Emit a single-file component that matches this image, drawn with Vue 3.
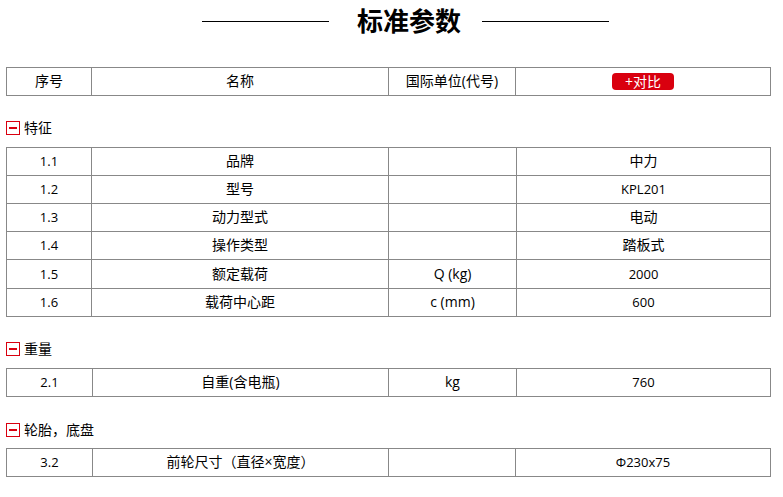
<script setup>
const head = ['序号', '名称', '国际单位(代号)']
const sections = [
  {
    title: '特征', cols: [85, 297, 128],
    rows: [
      ['1.1', '品牌', '', '中力'],
      ['1.2', '型号', '', 'KPL201'],
      ['1.3', '动力型式', '', '电动'],
      ['1.4', '操作类型', '', '踏板式'],
      ['1.5', '额定载荷', 'Q (kg)', '2000', true],
      ['1.6', '载荷中心距', 'c (mm)', '600'],
    ],
  },
  { title: '重量', cols: [86, 296, 128], rows: [['2.1', '自重(含电瓶)', 'kg', '760']] },
  { title: '轮胎，底盘', cols: [86, 296, 127], rows: [['3.2', '前轮尺寸（直径×宽度）', '', 'Φ230x75']] },
]
const isLatin = (text, i) => i !== 3 && !/[\u4e00-\u9fff]/.test(text)
</script>

<template>
  <div class="page">
    <header class="title">
      <span class="rule"></span>
      <h1>标准参数</h1>
      <span class="rule"></span>
    </header>

    <table class="grid head">
      <colgroup><col style="width: 85px" /><col style="width: 297px" /><col style="width: 127px" /><col /></colgroup>
      <tbody>
        <tr>
          <td v-for="h in head" :key="h">{{ h }}</td>
          <td><a class="compare">+对比</a></td>
        </tr>
      </tbody>
    </table>

    <section v-for="s in sections" :key="s.title" class="section">
      <h2 class="section-title">
        <svg class="toggle" width="14" height="14" viewBox="0 0 14 14">
          <rect x="0.5" y="0.5" width="13" height="13" fill="#fff" stroke="#d9000f" />
          <rect x="3" y="6" width="8" height="2" fill="#d9000f" />
        </svg>
        <span class="section-name">{{ s.title }}</span>
      </h2>
      <table class="grid">
        <colgroup>
          <col v-for="(w, i) in s.cols" :key="i" :style="{ width: w + 'px' }" />
          <col />
        </colgroup>
        <tbody>
          <tr v-for="r in s.rows" :key="r[0]" :class="{ tall: r[4] }">
            <td v-for="i in 4" :key="i" :class="{ latin: isLatin(r[i - 1], i) }">{{ r[i - 1] }}</td>
          </tr>
        </tbody>
      </table>
    </section>
  </div>
</template>

<style>
html, body { margin: 0; background: #fff; }
</style>

<style scoped>
.page {
  width: 765px;
  margin-left: 6px;
  color: #000;
  font-family: "Open Sans", "Noto Sans CJK SC", sans-serif;
  font-size: 14px;
}
.title {
  height: 42px;
  display: flex;
  align-items: center;
  justify-content: center;
  margin-bottom: 25px;
  padding-left: 34px;
}
.title h1 {
  margin: 0 21px 0 28px;
  font-size: 26px;
  line-height: 42px;
  font-weight: 700;
}
.rule { width: 127px; height: 1px; background: #000; }
.grid {
  width: 765px;
  table-layout: fixed;
  border-collapse: collapse;
}
.grid td {
  height: 28px;
  padding: 0 0 2px;
  border: 1px solid #888;
  text-align: center;
  vertical-align: middle;
  line-height: 20px;
  box-sizing: border-box;
}
.grid tr.tall td { height: 29px; padding-bottom: 0; }
.grid td.latin { font-size: 13px; }
.compare {
  display: block;
  width: 62px;
  height: 17px;
  margin: 2px auto 0;
  background: #d9000f;
  border-radius: 4px;
  color: #fff;
  line-height: 17px;
  font-size: 14px;
}
.section { padding-top: 22px; }
.section-title {
  display: flex;
  align-items: center;
  gap: 4px;
  height: 20px;
  margin: 0 0 9px;
  font-size: 14px;
  font-weight: 400;
}
.section-name { padding-bottom: 2px; }
.section:last-child { padding-top: 23px; }
.section:last-child .section-title { margin-bottom: 8px; }
.section:last-child .grid td { padding-bottom: 1px; }
.toggle { flex: none; }
</style>
